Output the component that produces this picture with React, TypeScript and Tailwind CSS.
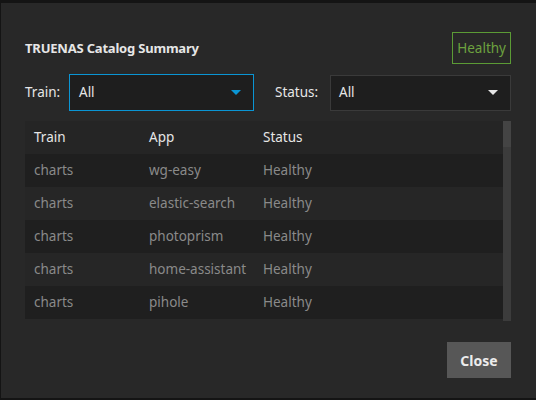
import React from 'react';

const rows = [
  { train: 'charts', app: 'wg-easy', status: 'Healthy' },
  { train: 'charts', app: 'elastic-search', status: 'Healthy' },
  { train: 'charts', app: 'photoprism', status: 'Healthy' },
  { train: 'charts', app: 'home-assistant', status: 'Healthy' },
  { train: 'charts', app: 'pihole', status: 'Healthy' },
];

function Caret({ color }: { color: string }) {
  return (
    <svg width="10" height="5" viewBox="0 0 10 5" className="shrink-0">
      <path d="M0 0 L10 0 L5 5 Z" fill={color} />
    </svg>
  );
}

export default function App() {
  return (
    <div
      className="w-[536px] h-[400px] bg-[#141414] pt-[3px] pb-[2px] pl-px"
      style={{ fontFamily: '"Noto Sans", "Open Sans", sans-serif' }}
    >
      <div className="h-full bg-[#282828] flex flex-col pl-6 pr-[25px]">
        {/* header */}
        <div className="flex items-end justify-between pt-[30px] h-[61px]">
          <h1 className="text-[13px] font-bold text-[#e6e6e6] pb-[6px] tracking-[-0.2px]">TRUENAS Catalog Summary</h1>
          <span className="border border-[#5b9b35] text-[#6da23f] text-[13.5px] px-[4px] h-[32px] flex items-center">Healthy</span>
        </div>

        {/* filters */}
        <div className="flex items-center mt-[10px] h-[37px]">
          <label className="text-[13.5px] text-[#e6e6e6] w-[44px]">Train:</label>
          <div className="w-[185px] h-[37px] bg-[#1e1e1e] border border-[#0a95d4] flex items-center justify-between pl-[9px] pr-[12px]">
            <span className="text-[13.5px] text-[#e6e6e6]">All</span>
            <Caret color="#0a95d4" />
          </div>
          <label className="text-[13.5px] text-[#e6e6e6] ml-[21px] w-[55px]">Status:</label>
          <div className="flex-1 h-[36px] bg-[#1e1e1e] border border-[#3a3a3a] flex items-center justify-between pl-[8px] pr-[12px]">
            <span className="text-[13.5px] text-[#e6e6e6]">All</span>
            <Caret color="#e6e6e6" />
          </div>
        </div>

        {/* table */}
        <div className="flex mt-[10px] h-[199px]">
          <div className="flex-1 flex flex-col">
            <div className="flex items-center h-[33px] bg-[#252525] text-[13.5px] text-[#e6e6e6]">
              <span className="w-[124px] pl-[9px]">Train</span>
              <span className="w-[114px]">App</span>
              <span>Status</span>
            </div>
            {rows.map((r, i) => (
              <div
                key={r.app}
                className={`flex items-center h-[33px] text-[13.5px] text-[#8a8a8a] ${i % 2 === 0 ? 'bg-[#1f1f1f]' : 'bg-[#262626]'}`}
              >
                <span className="w-[124px] pl-[9px]">{r.train}</span>
                <span className="w-[114px]">{r.app}</span>
                <span>{r.status}</span>
              </div>
            ))}
          </div>
          <div className="w-[8px] h-[200px] bg-[#3c3c3c] flex flex-col">
            <div className="h-[26px] bg-[#444444]" />
          </div>
        </div>

        {/* footer */}
        <div className="flex justify-end mt-[22px]">
          <button className="w-[64px] h-[36px] bg-[#575757] text-[#ececec] text-[14px] font-bold">Close</button>
        </div>
      </div>
    </div>
  );
}
